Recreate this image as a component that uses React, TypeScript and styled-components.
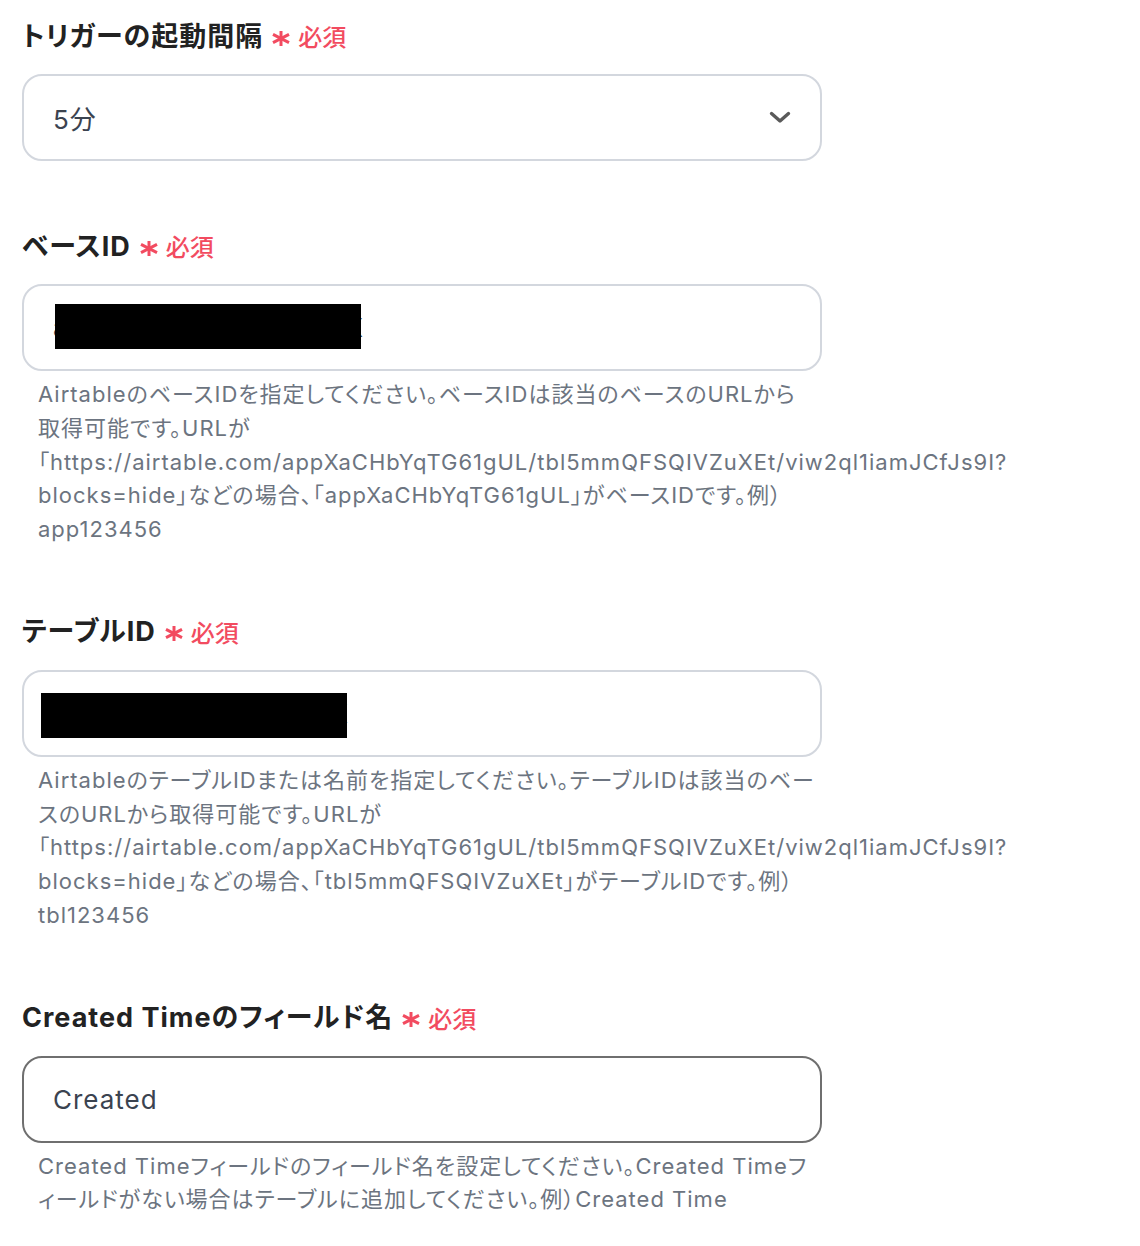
import React from "react";
import styled, { createGlobalStyle } from "styled-components";

const Global = createGlobalStyle`
  html, body { margin: 0; padding: 0; background: #ffffff; }
  body {
    font-family: Inter, "Noto Sans CJK JP", "Noto Sans", sans-serif;
    -webkit-font-smoothing: antialiased;
  }
`;

const Page = styled.div`
  display: flex;
  flex-direction: column;
  gap: 63px;
  padding: 14px 0 40px 22px;
  width: 1118px;
  box-sizing: border-box;
`;

const Field = styled.section`
  display: flex;
  flex-direction: column;
`;

const LabelRow = styled.div`
  display: flex;
  align-items: center;
  height: 40px;
  margin-bottom: 20px;
`;

const LabelText = styled.span`
  font-size: 27px;
  font-weight: 700;
  color: #222222;
  font-feature-settings: "palt";
  letter-spacing: 1px;
`;

const Required = styled.span`
  display: inline-flex;
  align-items: center;
  gap: 8px;
  margin-left: 9px;
  margin-top: 3px;
  color: #f24b60;
  font-size: 24px;
  font-weight: 500;
`;

const AsteriskIcon = styled.svg`
  width: 18px;
  height: 15px;
  margin-top: 5px;
`;

const InputBox = styled.div<{ $dark?: boolean }>`
  position: relative;
  box-sizing: border-box;
  width: 800px;
  height: 87px;
  border: 2px solid ${(p) => (p.$dark ? "#6f6f6f" : "#d3d7de")};
  border-radius: 20px;
  display: flex;
  align-items: center;
  justify-content: space-between;
  padding: 0 29px 0 29px;
  overflow: hidden;
`;

const Value = styled.span`
  font-size: 26px;
  color: #3b4350;
  letter-spacing: 1px;
  font-feature-settings: "palt";
`;

const Redaction = styled.div`
  position: absolute;
  background: #000000;
`;

const Chevron = styled.svg`
  width: 22px;
  height: 13px;
  flex-shrink: 0;
`;

const Description = styled.p`
  margin: 7px 0 0;
  padding: 0 16px;
  font-size: 22px;
  line-height: 33.75px;
  color: #6c7480;
  letter-spacing: 1px;
  white-space: nowrap;
  font-feature-settings: "palt";
`;

const Asterisk = () => (
  <AsteriskIcon viewBox="0 0 18 15" aria-hidden="true">
    <g stroke="#f24b60" strokeWidth="3" strokeLinecap="butt">
      <line x1="9" y1="0" x2="9" y2="15" />
      <line x1="1" y1="3.4" x2="17" y2="11.6" />
      <line x1="1" y1="11.6" x2="17" y2="3.4" />
    </g>
  </AsteriskIcon>
);

const Label = ({ children }: { children: React.ReactNode }) => (
  <LabelRow>
    <LabelText>{children}</LabelText>
    <Required>
      <Asterisk />
      必須
    </Required>
  </LabelRow>
);

export default function App() {
  return (
    <>
      <Global />
      <Page>
        <Field>
          <Label>トリガーの起動間隔</Label>
          <InputBox>
            <Value>5分</Value>
            <Chevron viewBox="0 0 22 13" aria-hidden="true">
              <polyline
                points="2.5,2.5 11,10 19.5,2.5"
                fill="none"
                stroke="#5a5a5a"
                strokeWidth="3.4"
                strokeLinecap="round"
                strokeLinejoin="round"
              />
            </Chevron>
          </InputBox>
        </Field>

        <Field>
          <Label>ベースID</Label>
          <InputBox>
            <Value>appXXXXXXXXXXXXXX</Value>
            <Redaction style={{ left: 31, top: 18, width: 306, height: 45 }} />
          </InputBox>
          <Description>
            AirtableのベースIDを指定してください。ベースIDは該当のベースのURLから
            <br />
            取得可能です。URLが
            <br />
            「https://airtable.com/appXaCHbYqTG61gUL/tbl5mmQFSQIVZuXEt/viw2ql1iamJCfJs9I?
            <br />
            blocks=hide」などの場合、「appXaCHbYqTG61gUL」がベースIDです。例）
            <br />
            app123456
          </Description>
        </Field>

        <Field>
          <Label>テーブルID</Label>
          <InputBox>
            <Value>tblXXXXXXXXXXXXXX</Value>
            <Redaction style={{ left: 17, top: 21, width: 306, height: 45 }} />
          </InputBox>
          <Description>
            AirtableのテーブルIDまたは名前を指定してください。テーブルIDは該当のベー
            <br />
            スのURLから取得可能です。URLが
            <br />
            「https://airtable.com/appXaCHbYqTG61gUL/tbl5mmQFSQIVZuXEt/viw2ql1iamJCfJs9I?
            <br />
            blocks=hide」などの場合、「tbl5mmQFSQIVZuXEt」がテーブルIDです。例）
            <br />
            tbl123456
          </Description>
        </Field>

        <Field>
          <Label>Created Timeのフィールド名</Label>
          <InputBox $dark>
            <Value>Created</Value>
          </InputBox>
          <Description>
            Created Timeフィールドのフィールド名を設定してください。Created Timeフ
            <br />
            ィールドがない場合はテーブルに追加してください。例）Created Time
          </Description>
        </Field>
      </Page>
    </>
  );
}
